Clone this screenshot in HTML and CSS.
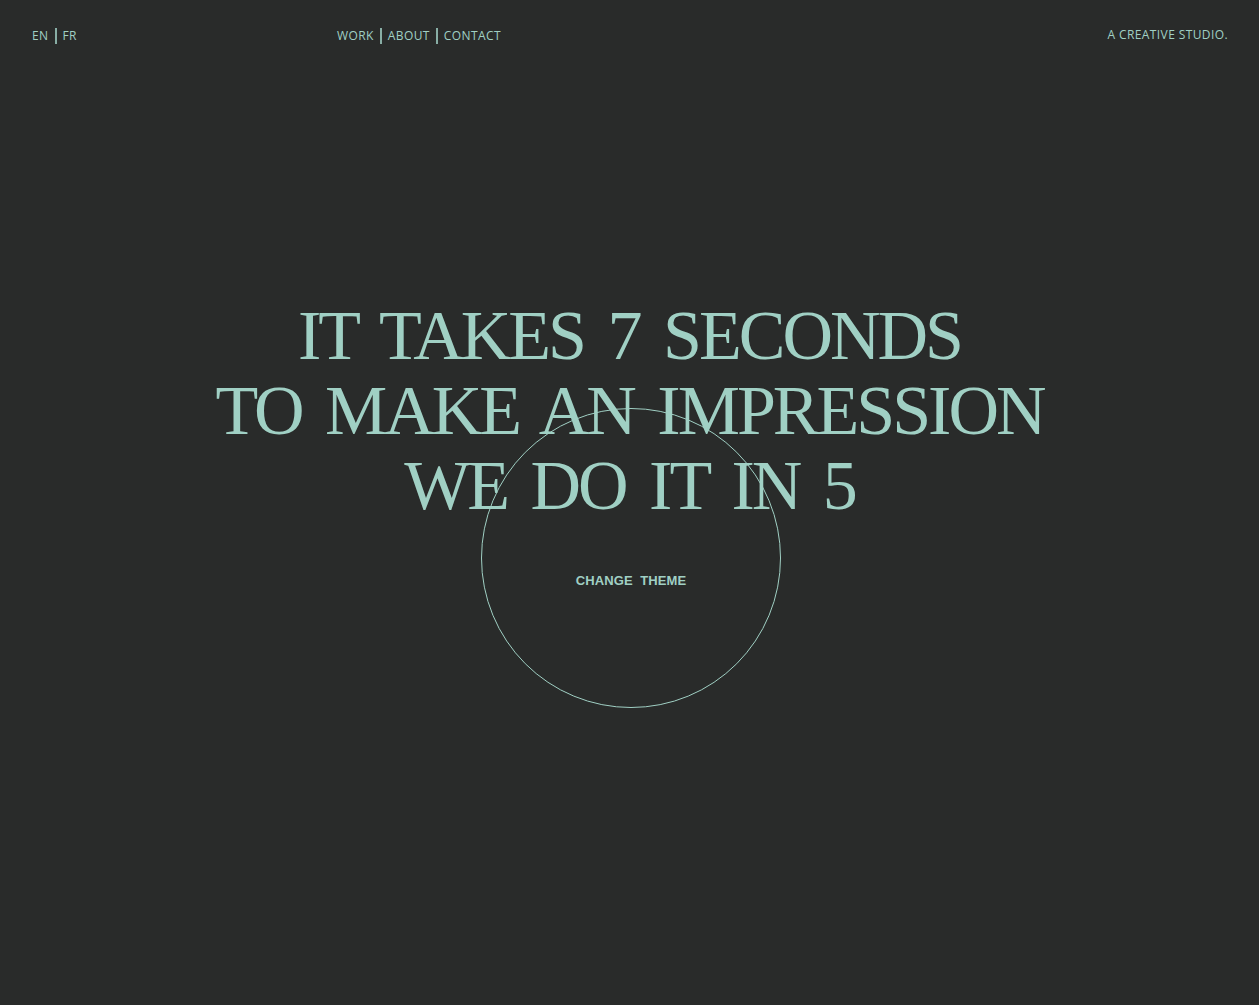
FILE: index.html
```html
<!DOCTYPE html>
<html lang="en">
<head>
<meta charset="utf-8">
<title>A Creative Studio</title>
<link rel="stylesheet" href="styles.css">
</head>
<body>
<header class="topbar">
  <div class="lang">
    <a href="#" class="link">EN</a><span class="sep"></span><a href="#" class="link">FR</a>
  </div>
  <nav class="menu">
    <a href="#" class="link">WORK</a><span class="sep"></span><a href="#" class="link">ABOUT</a><span class="sep"></span><a href="#" class="link">CONTACT</a>
  </nav>
  <div class="tagline">A CREATIVE STUDIO.</div>
</header>
<main class="hero">
  <h1 class="headline">
    <span class="line">IT TAKES 7 SECONDS</span>
    <span class="line">TO MAKE AN IMPRESSION</span>
    <span class="line">WE DO IT IN 5</span>
  </h1>
  <button class="theme-btn" type="button"><span class="theme-label">CHANGE&nbsp; THEME</span></button>
</main>
</body>
</html>
```
FILE: styles.css
```css
* { box-sizing: border-box; }
html, body { margin: 0; padding: 0; }
body {
  background: #292b2a;
  color: #a0d0c4;
  min-height: 100vh;
  font-family: "Open Sans", "Liberation Sans", sans-serif;
}
.topbar {
  display: flex;
  align-items: center;
  padding: 27px 31px 0 32px;
  height: 45px;
}
.lang {
  width: 305px;
  display: flex;
  align-items: center;
}
.menu {
  flex: 1;
  display: flex;
  align-items: center;
}
.link {
  color: #a0d0c4;
  text-decoration: none;
  font-size: 12px;
  letter-spacing: 0.4px;
  line-height: 18px;
}
.sep {
  display: inline-block;
  width: 2px;
  height: 16px;
  background: rgba(160, 208, 196, 0.8);
  margin: 0 6px;
}
.tagline {
  font-size: 12px;
  letter-spacing: 0.4px;
  line-height: 16px;
  margin-top: -3px;
}
.hero {
  position: relative;
  padding-top: 253px;
  text-align: center;
}
.headline {
  margin: 0;
  font-family: "Liberation Serif", "Times New Roman", serif;
  font-weight: normal;
  font-size: 70px;
  line-height: 75px;
  letter-spacing: -3px;
  word-spacing: 9px;
  color: #a0d0c4;
}
.line { display: block; }
.theme-btn {
  position: absolute;
  left: 481px;
  top: 363px;
  width: 300px;
  height: 300px;
  border-radius: 50%;
  border: 1px solid #a0d0c4;
  background: transparent;
  color: #a0d0c4;
  cursor: pointer;
  padding: 44px 0 0 0;
  font-family: "Liberation Sans", Arial, sans-serif;
  font-weight: bold;
  font-size: 13px;
  letter-spacing: 0.1px;
}
.theme-label { display: block; }
```
